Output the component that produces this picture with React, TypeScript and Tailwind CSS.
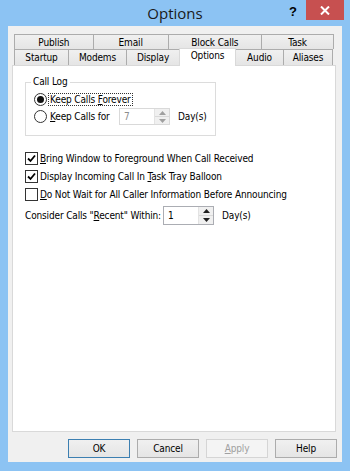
import React from "react";

const font = { fontFamily: '"DejaVu Sans Condensed", "Liberation Sans", Arial, sans-serif' };
const T = "text-[10px] tracking-[-0.15px]";

function Tab({ label, w }: { label: string; w: string }) {
  return (
    <div
      className={`${w} h-full border-t border-l border-r border-[#acacac] bg-gradient-to-b from-[#f0f0f0] to-[#e5e5e5] flex items-center justify-center ${T} text-black -ml-px first:ml-0`}
    >
      {label}
    </div>
  );
}

function Spin({ value, disabled, h }: { value: string; disabled?: boolean; h: string }) {
  return (
    <div className={`w-[51px] ${h} border ${disabled ? "border-[#d9d9d9] bg-white" : "border-[#abadb3] bg-white"} flex`}>
      <div className={`flex-1 pl-[4px] flex items-center ${T} ${disabled ? "text-[#8d8d8d]" : "text-black"}`}>{value}</div>
      <div className="w-[15px] flex flex-col border-l border-[#e3e3e3] bg-[#f0f0f0]">
        <div className="flex-1 flex items-center justify-center border-b border-[#d9d9d9]">
          <svg width="7" height="4" viewBox="0 0 7 4"><path d="M3.5 0 L7 4 L0 4Z" fill={disabled ? "#a0a0a0" : "#202020"} /></svg>
        </div>
        <div className="flex-1 flex items-center justify-center">
          <svg width="7" height="4" viewBox="0 0 7 4"><path d="M0 0 L7 0 L3.5 4Z" fill={disabled ? "#a0a0a0" : "#202020"} /></svg>
        </div>
      </div>
    </div>
  );
}

function Check({ checked, children }: { checked: boolean; children: React.ReactNode }) {
  return (
    <div className="h-[18px] flex items-center">
      <div className="w-[13px] h-[13px] border border-[#333] bg-white flex items-center justify-center">
        {checked && (
          <svg width="9" height="9" viewBox="0 0 9 9">
            <path d="M1 4.5 L3.5 7 L8 1.5" stroke="#000" strokeWidth="1.8" fill="none" />
          </svg>
        )}
      </div>
      <span className={`ml-[2px] ${T} text-black`}>{children}</span>
    </div>
  );
}

function Radio({ checked, children, focus }: { checked: boolean; children: React.ReactNode; focus?: boolean }) {
  return (
    <div className="flex items-center">
      <div className="w-[13px] h-[13px] rounded-full border border-[#333] bg-white flex items-center justify-center">
        {checked && <div className="w-[7px] h-[7px] rounded-full bg-[#111]" />}
      </div>
      <span className={`ml-[1px] px-px ${T} text-black leading-[11px] border border-dotted ${focus ? "border-[#333]" : "border-transparent"}`}>
        {children}
      </span>
    </div>
  );
}

function Btn({ children, primary, disabled }: { children: React.ReactNode; primary?: boolean; disabled?: boolean }) {
  return (
    <div
      className={`w-[62px] h-[19px] flex items-center justify-center ${T} border ${
        primary
          ? "border-[#3c7fb1] bg-gradient-to-b from-[#f0f0f0] to-[#e5e5e5] text-black"
          : disabled
          ? "border-[#d5d5d5] bg-[#f4f4f4] text-[#a0a0a0]"
          : "border-[#acacac] bg-gradient-to-b from-[#f0f0f0] to-[#e5e5e5] text-black"
      }`}
    >
      {children}
    </div>
  );
}

export default function App() {
  return (
    <div className="w-[350px] h-[471px] bg-[#8cc3f3] flex flex-col" style={font}>
      <div className="h-[26px] relative flex items-center justify-center">
        <span className="text-[15px] text-[#1a1a1a]" style={{ fontFamily: '"Open Sans", "Liberation Sans", sans-serif' }}>Options</span>
        <div className="absolute right-[6px] top-0 flex items-start">
          <span className="text-[13px] font-bold text-black mr-[9px] mt-[2px]" style={{ fontFamily: '"Liberation Sans", sans-serif' }}>?</span>
          <div className="w-[38px] h-[20px] bg-[#c75050] flex items-center justify-center">
            <svg width="10" height="9" viewBox="0 0 10 9"><path d="M1 0.5 L9 8.5 M9 0.5 L1 8.5" stroke="#fff" strokeWidth="2" /></svg>
          </div>
        </div>
      </div>
      <div className="mx-[8px] mb-[9px] flex-1 bg-[#f0f0f0] flex flex-col">
        <div className="mt-[8px] ml-[6px] w-[320px] flex flex-col">
          <div className="h-[15px] flex">
            <Tab label="Publish" w="w-[80px]" />
            <Tab label="Email" w="w-[76px]" />
            <Tab label="Block Calls" w="w-[95px]" />
            <Tab label="Task" w="w-[73px]" />
          </div>
          <div className="h-[16px] flex items-end">
            <Tab label="Startup" w="w-[55px]" />
            <Tab label="Modems" w="w-[59px]" />
            <Tab label="Display" w="w-[54px]" />
            <div className={`w-[57px] h-[18px] -mb-[1px] relative z-10 bg-white border-t border-l border-r border-[#d9d9d9] -ml-px flex items-start justify-center ${T} leading-[14px] text-black`}>
              Options
            </div>
            <Tab label="Audio" w="w-[49px]" />
            <Tab label="Aliases" w="w-[50px]" />
          </div>
        </div>
        <div className="ml-[4px] w-[324px] h-[367px] border border-[#d9d9d9] bg-white flex flex-col">
          <div className="ml-[12px] mt-[16px] w-[191px] h-[54px] border border-[#dcdcdc] relative">
            <span className={`absolute -top-[8px] left-[5px] bg-white px-[2px] ${T} text-black leading-[14px]`}>Call Log</span>
            <div className="mt-[10px] ml-[8px]">
              <Radio checked focus>
                Keep Calls <u>F</u>orever
              </Radio>
            </div>
            <div className="mt-[2px] ml-[8px] flex items-center">
              <div className="w-[85px]">
                <Radio checked={false}>
                  <u>K</u>eep Calls for
                </Radio>
              </div>
              <Spin value="7" disabled h="h-[17px]" />
              <span className={`ml-[8px] ${T} text-black`}>Day(s)</span>
            </div>
          </div>
          <div className="ml-[12px] mt-[13px] flex flex-col">
            <Check checked>
              <u>B</u>ring Window to Foreground When Call Received
            </Check>
            <Check checked>
              Display Incoming Call In <u>T</u>ask Tray Balloon
            </Check>
            <Check checked={false}>
              <u>D</u>o Not Wait for All Caller Information Before Announcing
            </Check>
            <div className="mt-[3px] flex items-center">
              <span className={`w-[138px] ${T} text-black`}>Consider Calls "<u>R</u>ecent" Within:</span>
              <Spin value="1" h="h-[19px]" />
              <span className={`ml-[8px] ${T} text-black`}>Day(s)</span>
            </div>
          </div>
        </div>
        <div className="mt-[7px] ml-[60px] flex gap-[7px]">
          <Btn primary>OK</Btn>
          <Btn>Cancel</Btn>
          <Btn disabled>
            <u>A</u>pply
          </Btn>
          <Btn>Help</Btn>
        </div>
      </div>
    </div>
  );
}
